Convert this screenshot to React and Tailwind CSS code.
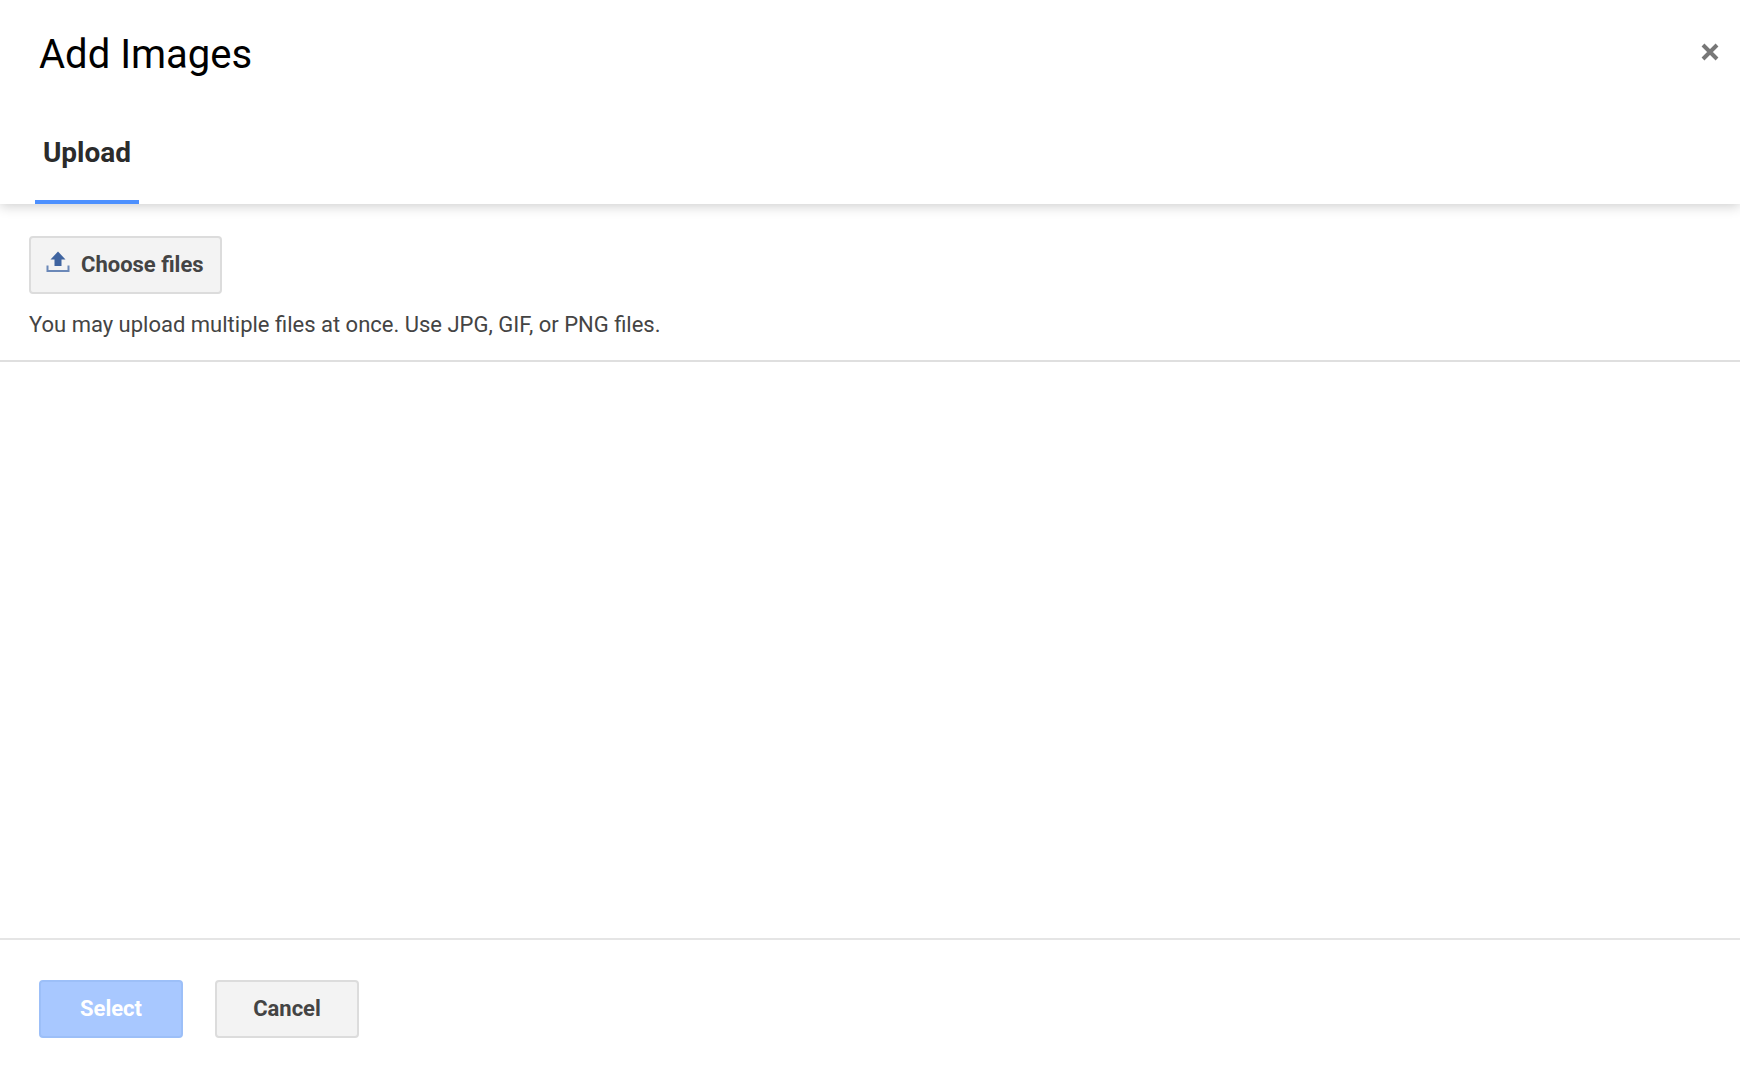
import React from 'react';

const UploadIcon = () => (
  <svg width="24" height="24" viewBox="0 0 24 24" aria-hidden="true" className="shrink-0">
    <path d="M12 1.5 L19.5 9.5 H15.5 V16 H8.5 V9.5 H4.5 Z" fill="#3f64a0" />
    <path d="M1.5 15.5 V21 H22.5 V15.5" fill="none" stroke="#6b88b8" strokeWidth="2" />
  </svg>
);

const CloseIcon = () => (
  <svg width="20" height="20" viewBox="0 0 20 20" aria-hidden="true">
    <path d="M3 3 L17 17 M17 3 L3 17" stroke="#777777" strokeWidth="4" />
  </svg>
);

const btn = 'h-[58px] rounded-[4px] border-2 text-[22px] font-bold';

export default function App() {
  return (
    <div className="h-[1072px] w-[1740px] flex flex-col bg-white font-['Roboto',sans-serif] overflow-hidden">
      <header className="h-[204px] shrink-0 flex flex-col shadow-[0_2px_12px_rgba(0,0,0,0.2)] relative">
        <div className="h-[108px] pl-[39px] pr-[20px] pt-[28px] flex justify-between items-start">
          <h1 className="text-[40px] leading-[54px] text-black">Add Images</h1>
          <button className="mt-[14px]">
            <CloseIcon />
          </button>
        </div>
        <div className="pl-[35px] flex-1 flex">
          <div className="w-[104px] border-b-4 border-[#4d90fe] flex justify-center pt-[27px]">
            <span className="text-[28px] leading-[36px] font-bold text-[#2b2b2b]">Upload</span>
          </div>
        </div>
      </header>

      <section className="h-[158px] shrink-0 pt-[32px] pl-[29px] border-b-2 border-[#dfdfdf]">
        <button className={`${btn} w-[193px] border-[#dcdcdc] bg-[#f3f3f3] text-[#444444] flex items-center pl-[15px] gap-[11px]`}>
          <span className="-mt-[6px]"><UploadIcon /></span>
          <span className="-mt-[2px]">Choose files</span>
        </button>
        <p className="mt-[15px] text-[22px] leading-[32px] text-[#444444]">
          You may upload multiple files at once. Use JPG, GIF, or PNG files.
        </p>
      </section>

      <div className="flex-1" />

      <footer className="h-[134px] shrink-0 border-t-2 border-[#e5e5e5] pt-[40px] pl-[39px] flex items-start gap-[32px]">
        <button className={`${btn} w-[144px] border-[#9cbff8] bg-[#a8c8ff] text-white pb-[2px]`}>Select</button>
        <button className={`${btn} w-[144px] border-[#dcdcdc] bg-[#f3f3f3] text-[#444444] pb-[2px]`}>Cancel</button>
      </footer>
    </div>
  );
}
